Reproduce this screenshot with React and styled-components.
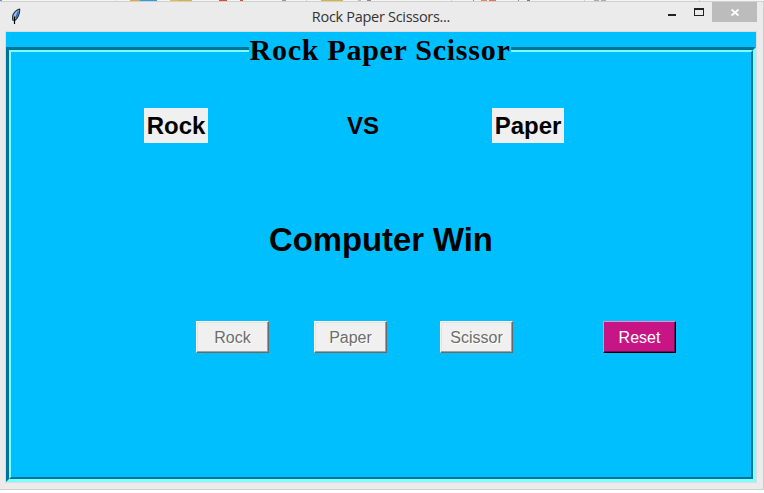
import React from "react";
import styled, { createGlobalStyle } from "styled-components";

const GlobalStyle = createGlobalStyle`
  * { box-sizing: border-box; }
  body { margin: 0; background: #fff; overflow: hidden; font-family: "Liberation Sans", Arial, sans-serif; }
`;

const Desktop = styled.div`
  width: 764px;
  height: 493px;
  display: flex;
  flex-direction: column;
  background: #fff;
`;

const BackdropStrip = styled.svg`
  display: block;
  height: 1px;
  width: 764px;
  background: #f4f4f4;
`;

const Window = styled.div`
  width: 764px;
  height: 489px;
  border: 1px solid #cfcfcf;
  border-left: 0;
  background: #ebebeb;
  padding: 0 6px 6px 5px;
`;

const TitleBar = styled.header`
  height: 29px;
  display: grid;
  grid-template-columns: 200px 1fr 200px;
`;

const AppIcon = styled.svg`
  display: block;
  margin: 6px 0 0 5px;
`;

const Caption = styled.div`
  text-align: center;
  white-space: nowrap;
  font: 14.5px/29px "Open Sans", "Noto Sans", sans-serif;
  letter-spacing: -0.3px;
  color: #333;
`;

const WindowControls = styled.div`
  display: flex;
  justify-content: flex-end;
  align-items: flex-start;
`;

const ControlIcon = styled.svg`
  display: block;
`;

const CloseButton = styled.div`
  width: 45px;
  height: 20px;
  background: #bcbcbc;
`;

const Client = styled.main`
  width: 752px;
  height: 452px;
  border: 1px solid #dcdcdc;
  background: #00bfff;
  padding-top: 2px;
`;

const Group = styled.section`
  width: 750px;
  height: 448px;
  display: flex;
  flex-direction: column;
`;

const Legend = styled.h1`
  margin: 0 0 -24px 243px;
  width: 262px;
  height: 37px;
  background: #00bfff;
  z-index: 1;
  text-align: center;
  white-space: nowrap;
  font: 700 30px/32px "Liberation Serif", serif;
  letter-spacing: 0.73px;
  color: #000;
`;

const Ridge = styled.div`
  flex: 1;
  border: 3px solid;
  border-color: #007399 #80ffff #80ffff #007399;
`;

const Groove = styled.div`
  height: 100%;
  border: 2px solid;
  border-color: #80ffff #007399 #007399 #80ffff;
  display: flex;
  flex-direction: column;
`;

const Versus = styled.div`
  margin-top: 56px;
  height: 35px;
  display: grid;
  grid-template-columns: 133px 64px 139px 32px 113px 72px;
`;

const Choice = styled.div`
  height: 35px;
  background: ${(p) => (p.$plain ? "transparent" : "#f0f0f0")};
  font: 700 24px/36px "Liberation Sans", Arial, sans-serif;
  text-align: center;
  white-space: nowrap;
  color: #000;
`;

const Result = styled.h2`
  margin: 77px 0 0;
  height: 40px;
  font: 700 32.8px/40px "Liberation Sans", Arial, sans-serif;
  text-align: center;
  color: #000;
`;

const Actions = styled.div`
  margin-top: 61px;
  padding-left: 185px;
  display: flex;
`;

const GameButton = styled.button`
  width: 73px;
  height: 32px;
  padding: 2px 0 0;
  margin-right: ${(p) => p.$gap || 0}px;
  border: 1px solid;
  border-color: ${(p) => (p.$accent ? "#f28cc8 #000 #000 #f28cc8" : "#fff #696969 #696969 #fff")};
  box-shadow: ${(p) =>
    p.$accent ? "inset -1px -1px #780c50" : "inset -1px -1px #a0a0a0, inset 1px 1px #e3e3e3"};
  background: ${(p) => (p.$accent ? "#c71585" : "#f0f0f0")};
  color: ${(p) => (p.$accent ? "#fff" : "#6d6d6d")};
  text-shadow: ${(p) => (p.$accent ? "none" : "1px 1px #fff")};
  font: 16px/28px "Liberation Sans", Arial, sans-serif;
  white-space: nowrap;
`;

const fragments = [
  [0, 2, "#7290c8"], [115, 1, "#ddd"], [130, 10, "#d9ad38"], [140, 17, "#2c9de8"],
  [170, 8, "#e3bd50"], [178, 14, "#d9b23c"], [219, 8, "#e44732"], [240, 3, "#e44732"],
  [282, 4, "#999"], [306, 1, "#ccc"], [321, 22, "#d9b23c"], [358, 3, "#bbb"], [367, 4, "#888"],
  [451, 1, "#ccc"], [473, 1, "#888"], [481, 6, "#f0825b"], [489, 7, "#e9734c"], [518, 1, "#888"],
  [527, 3, "#777"], [584, 1, "#ccc"], [594, 5, "#aaa"], [601, 5, "#aaa"], [699, 1, "#ccc"],
];

export default function App() {
  return (
    <>
      <GlobalStyle />
      <Desktop>
        <BackdropStrip viewBox="0 0 764 1" shapeRendering="crispEdges">
          {fragments.map(([x, w, fill]) => (
            <rect key={x} x={x} y="0" width={w} height="1" fill={fill} />
          ))}
        </BackdropStrip>
        <Window>
          <TitleBar>
            <AppIcon width="12" height="17" viewBox="0 0 12 17">
              <path d="M9.500 1.200C6.500 1.800 3.200 4.800 2.600 8.500L2.700 12 5 12.300C7.800 10 9.600 6 9.700 1.500Z" fill="#8fc3f2" stroke="#2b3038" strokeWidth="1.200" />
              <path d="M8.300 3.500 5.800 10" stroke="#2f66bd" strokeWidth="1.500" />
              <path d="M4.500 8.500V16" stroke="#000" strokeWidth="1.200" />
            </AppIcon>
            <Caption>Rock Paper Scissors...</Caption>
            <WindowControls>
              <ControlIcon width="45" height="20" viewBox="0 0 45 20" shapeRendering="crispEdges">
                <path d="M1 12h8v2H1z" fill="#222" />
                <path d="M27 6h10v8H27zM28 8v5h8V8z" fill="#222" fillRule="evenodd" />
              </ControlIcon>
              <CloseButton>
                <ControlIcon width="45" height="20" viewBox="0 0 45 20">
                  <path d="m19.500 7.500 7 6m0-6-7 6" stroke="#fff" strokeWidth="1.700" />
                </ControlIcon>
              </CloseButton>
            </WindowControls>
          </TitleBar>
          <Client>
            <Group>
              <Legend>Rock Paper Scissor</Legend>
              <Ridge>
                <Groove>
                  <Versus>
                    <span />
                    <Choice>Rock</Choice>
                    <span />
                    <Choice $plain>VS</Choice>
                    <span />
                    <Choice>Paper</Choice>
                  </Versus>
                  <Result>Computer Win</Result>
                  <Actions>
                    <GameButton $gap={45} disabled>Rock</GameButton>
                    <GameButton $gap={53} disabled>Paper</GameButton>
                    <GameButton $gap={90} disabled>Scissor</GameButton>
                    <GameButton $accent>Reset</GameButton>
                  </Actions>
                </Groove>
              </Ridge>
            </Group>
          </Client>
        </Window>
      </Desktop>
    </>
  );
}
